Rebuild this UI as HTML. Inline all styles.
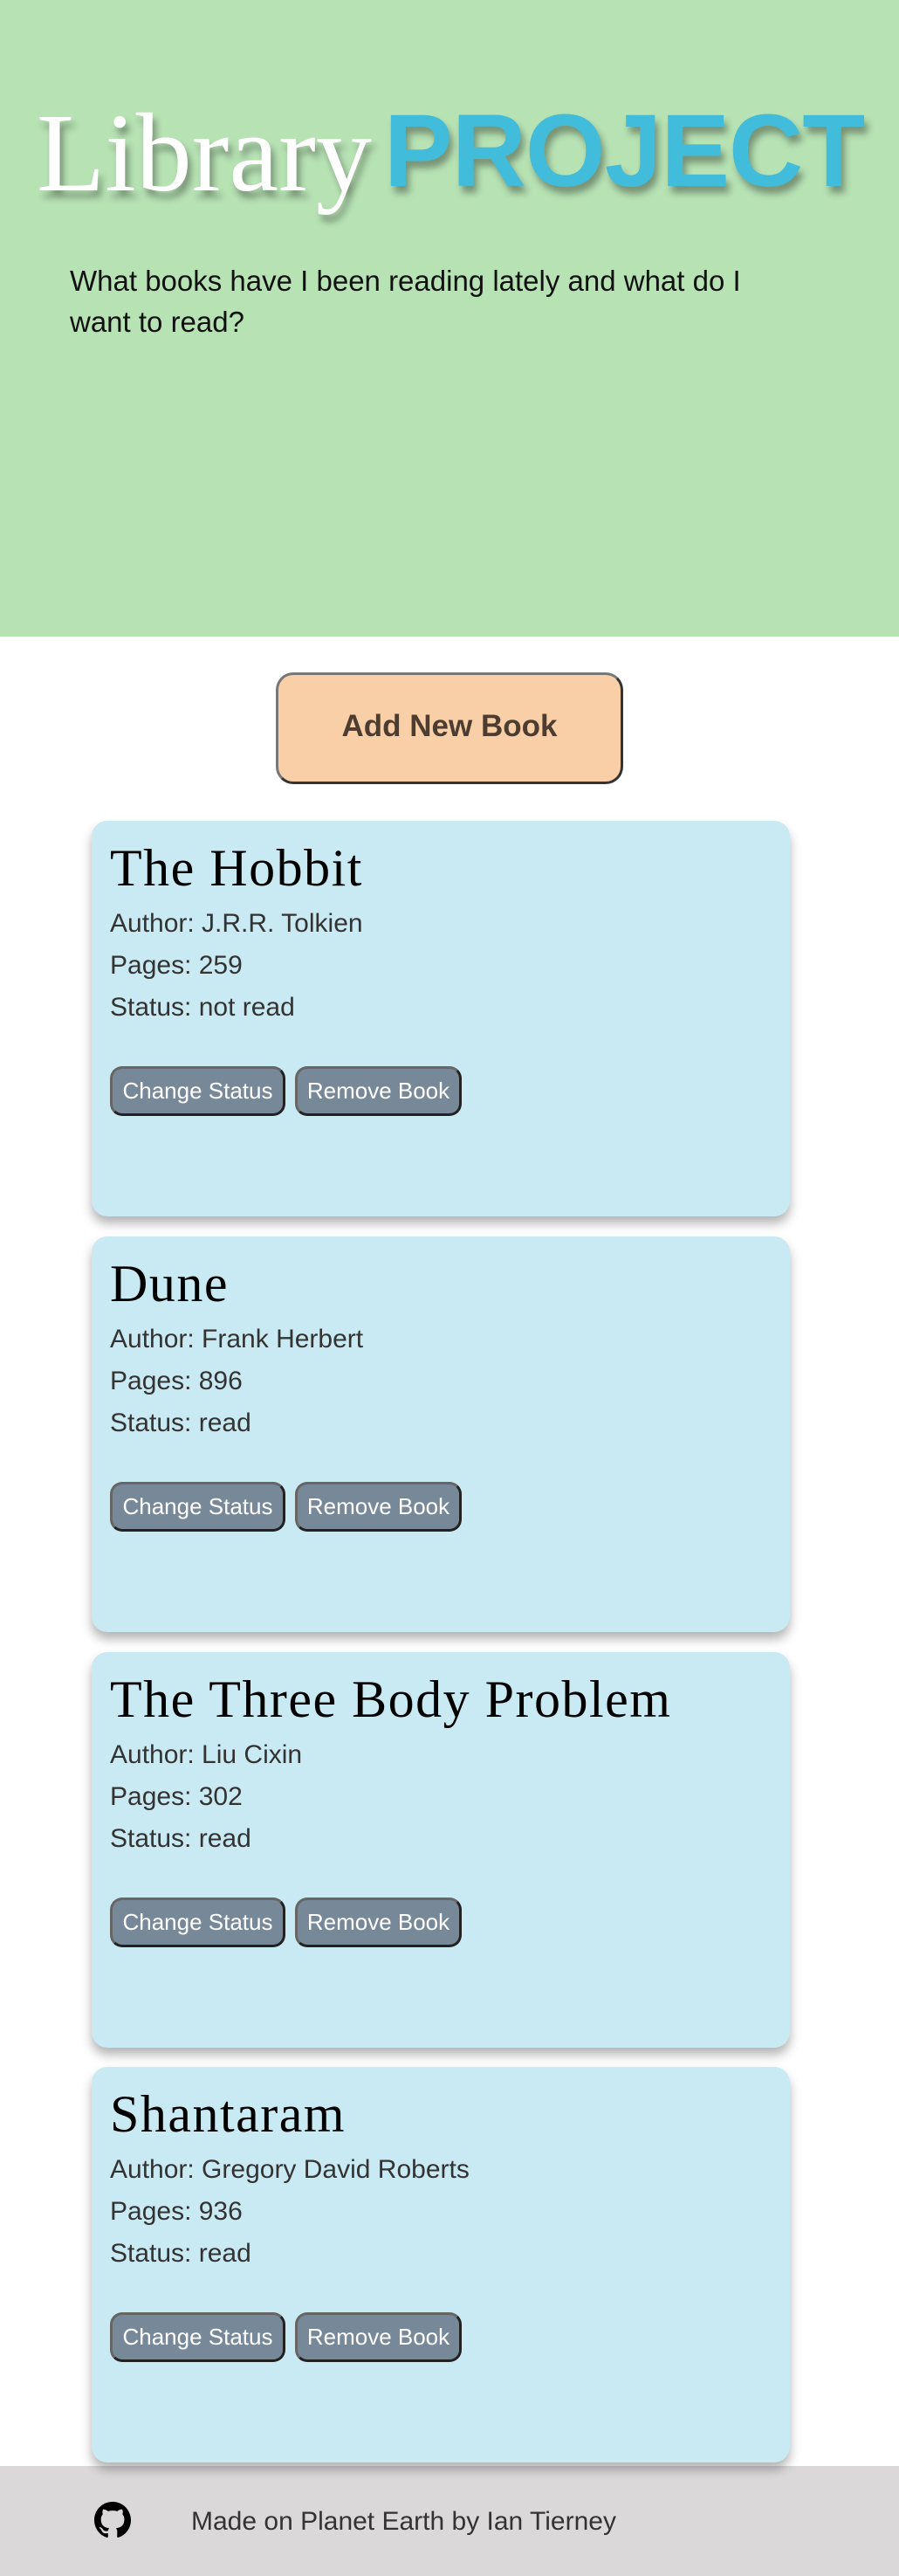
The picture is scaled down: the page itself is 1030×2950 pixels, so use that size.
<!DOCTYPE html>
<html><head><meta charset="utf-8"><style>
*{margin:0;padding:0;box-sizing:border-box}
body{width:1030px;height:2950px;position:relative;background:#fff;font-family:"Liberation Sans",sans-serif;overflow:hidden}
.hdr{position:absolute;left:0;top:0;width:1030px;height:729px;background:#b7e2b4}
.lib{position:absolute;left:42px;top:100px;font-family:"Liberation Serif",serif;font-size:128px;color:#fff;line-height:150px;text-shadow:4px 8px 8px rgba(0,0,0,.35);letter-spacing:0px}
.proj{position:absolute;left:440px;top:98px;font-weight:bold;font-size:118px;color:#41bcda;line-height:150px;text-shadow:4px 8px 8px rgba(0,0,0,.35);letter-spacing:-1px}
.desc{position:absolute;left:80px;top:298px;width:830px;font-size:33px;line-height:47px;color:#111}
.add{position:absolute;left:316px;top:770px;width:398px;height:128px;background:#f9cfa8;border:3px solid #333;border-top-color:#777;border-left-color:#777;border-radius:20px;font-weight:bold;font-size:35px;color:#4d3d30;text-align:center;line-height:118px}
.card{position:absolute;left:105px;width:800px;height:453px;background:#c9e9f3;border-radius:18px;box-shadow:0 8px 12px rgba(0,0,0,.3);z-index:2}
.card h2{position:absolute;left:21px;top:20px;font-family:"Liberation Serif",serif;font-weight:normal;font-size:60px;color:#000;line-height:68px;letter-spacing:1.5px}
.card p{position:absolute;left:21px;font-size:30px;color:#333;line-height:36px}
.btn{position:absolute;top:281px;height:57px;background:#778899;border:3px solid #222;border-top-color:#666;border-left-color:#666;border-radius:14px;color:#fff;font-size:26px;line-height:50px;text-align:center}
.foot{position:absolute;left:0;top:2824px;width:1030px;height:126px;background:#dad8d9}
.foot span{position:absolute;left:219px;top:46px;font-size:30px;color:#333;line-height:36px}
.foot svg{position:absolute;left:108px;top:41px}
</style></head><body>
<div class="hdr">
<div class="lib">Library</div>
<div class="proj">PROJECT</div>
<div class="desc">What books have I been reading lately and what do I want to read?</div>
</div>
<div class="add">Add New Book</div>

<div class="card" style="top:940px"><h2>The Hobbit</h2><p style="top:100px">Author: J.R.R. Tolkien</p><p style="top:148px">Pages: 259</p><p style="top:196px">Status: not read</p><div class="btn" style="left:21px;width:201px">Change Status</div><div class="btn" style="left:233px;width:191px">Remove Book</div></div>
<div class="card" style="top:1416px"><h2>Dune</h2><p style="top:100px">Author: Frank Herbert</p><p style="top:148px">Pages: 896</p><p style="top:196px">Status: read</p><div class="btn" style="left:21px;width:201px">Change Status</div><div class="btn" style="left:233px;width:191px">Remove Book</div></div>
<div class="card" style="top:1892px"><h2>The Three Body Problem</h2><p style="top:100px">Author: Liu Cixin</p><p style="top:148px">Pages: 302</p><p style="top:196px">Status: read</p><div class="btn" style="left:21px;width:201px">Change Status</div><div class="btn" style="left:233px;width:191px">Remove Book</div></div>
<div class="card" style="top:2367px"><h2>Shantaram</h2><p style="top:100px">Author: Gregory David Roberts</p><p style="top:148px">Pages: 936</p><p style="top:196px">Status: read</p><div class="btn" style="left:21px;width:201px">Change Status</div><div class="btn" style="left:233px;width:191px">Remove Book</div></div>

<div class="foot">
<svg width="42" height="42" viewBox="0 0 16 16"><path fill="#000" d="M8 0C3.58 0 0 3.58 0 8c0 3.54 2.29 6.530 5.47 7.59.4.07.55-.17.55-.38 0-.19-.01-.82-.01-1.49-2.01.37-2.530-.49-2.69-.94-.09-.23-.48-.94-.82-1.13-.28-.15-.68-.52-.01-.53.63-.01 1.08.58 1.23.82.72 1.21 1.87.87 2.33.66.07-.52.28-.87.51-1.07-1.78-.2-3.64-.89-3.64-3.95 0-.87.31-1.59.82-2.15-.08-.2-.36-1.02.08-2.12 0 0 .67-.21 2.2.82.64-.18 1.32-.27 2-.27.68 0 1.36.09 2 .27 1.53-1.04 2.2-.82 2.2-.82.44 1.1.16 1.92.08 2.12.51.56.82 1.27.82 2.15 0 3.07-1.87 3.75-3.65 3.95.29.25.54.73.54 1.48 0 1.07-.01 1.93-.01 2.2 0 .21.15.46.55.38A8.013 8.013 0 0016 8c0-4.42-3.58-8-8-8z"/></svg>
<span>Made on Planet Earth by Ian Tierney</span>
</div>
</body></html>
